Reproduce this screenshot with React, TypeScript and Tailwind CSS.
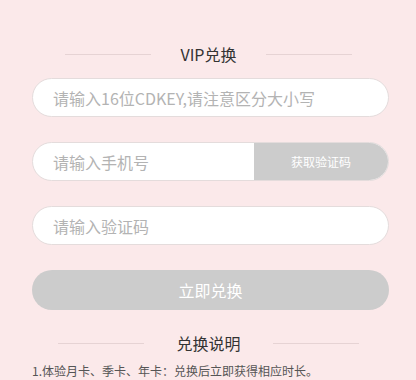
import React, { useState } from "react";

const font = { fontFamily: '"Noto Sans CJK SC", "Noto Sans", sans-serif' };

const SectionTitle: React.FC<{ text: string; gap: string; line: string }> = ({ text, gap, line }) => (
  <div className={`flex items-center justify-center ${gap}`}>
    <div className={`h-px ${line} bg-[#e6d3d4]`} />
    <span className="text-[16px] leading-[22px] text-[#333]">{text}</span>
    <div className={`h-px ${line} bg-[#e6d3d4]`} />
  </div>
);

export default function App() {
  const [cdkey, setCdkey] = useState("");
  const [phone, setPhone] = useState("");
  const [code, setCode] = useState("");

  return (
    <div className="w-[416px] h-[380px] overflow-hidden bg-[#fbe9ea] pt-[43px] pl-[32px] pr-[27px]" style={font}>
      {/* VIP title */}
      <div className="-ml-[32px] -mr-[27px] pl-[1px]">
        <SectionTitle text="VIP兑换" gap="gap-[29px]" line="w-[86px]" />
      </div>

      {/* CDKEY */}
      <div className="mt-[13px] h-[39px] rounded-full bg-white border border-[#e4dcdc] flex items-center pl-[20px]">
        <input
          value={cdkey}
          onChange={(e) => setCdkey(e.target.value)}
          placeholder="请输入16位CDKEY,请注意区分大小写"
          className="w-full bg-transparent outline-none text-[16px] text-[#333] placeholder:text-[#b3b3b3]"
        />
      </div>

      {/* Phone + get code */}
      <div className="mt-[25px] h-[39px] rounded-full bg-white border border-[#e4dcdc] flex items-stretch overflow-hidden">
        <div className="flex-1 flex items-center pl-[20px]">
          <input
            value={phone}
            onChange={(e) => setPhone(e.target.value)}
            placeholder="请输入手机号"
            className="w-full bg-transparent outline-none text-[16px] text-[#333] placeholder:text-[#b3b3b3]"
          />
        </div>
        <button className="w-[134px] bg-[#cccccc] text-white text-[12px] flex items-center justify-center">
          获取验证码
        </button>
      </div>

      {/* Verify code */}
      <div className="mt-[25px] h-[39px] rounded-full bg-white border border-[#e4dcdc] flex items-center pl-[20px]">
        <input
          value={code}
          onChange={(e) => setCode(e.target.value)}
          placeholder="请输入验证码"
          className="w-full bg-transparent outline-none text-[16px] text-[#333] placeholder:text-[#b3b3b3]"
        />
      </div>

      {/* Submit */}
      <button className="mt-[25px] w-full h-[40px] rounded-full bg-[#cccccc] text-white text-[16px]">
        立即兑换
      </button>

      {/* Instructions */}
      <div className="mt-[22px] -ml-[32px] -mr-[27px] pl-[1px]">
        <SectionTitle text="兑换说明" gap="gap-[32px]" line="w-[86px]" />
      </div>
      <p className="mt-[8px] text-[12px] leading-[18px] text-[#555]">
        1.体验月卡、季卡、年卡：兑换后立即获得相应时长。
      </p>
    </div>
  );
}
